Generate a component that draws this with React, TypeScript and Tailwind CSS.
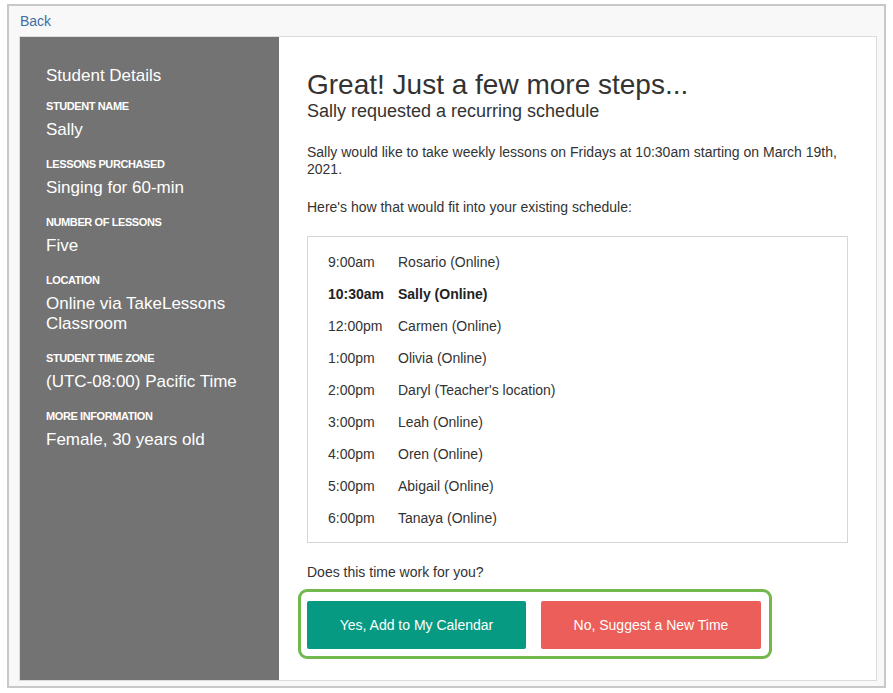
import React from 'react';

const details = [
  { label: 'Student Name', value: 'Sally' },
  { label: 'Lessons Purchased', value: 'Singing for 60-min' },
  { label: 'Number of Lessons', value: 'Five' },
  { label: 'Location', value: 'Online via TakeLessons Classroom' },
  { label: 'Student Time Zone', value: '(UTC-08:00) Pacific Time' },
  { label: 'More Information', value: 'Female, 30 years old' },
];

const schedule = [
  { time: '9:00am', who: 'Rosario (Online)' },
  { time: '10:30am', who: 'Sally (Online)', current: true },
  { time: '12:00pm', who: 'Carmen (Online)' },
  { time: '1:00pm', who: 'Olivia (Online)' },
  { time: '2:00pm', who: "Daryl (Teacher's location)" },
  { time: '3:00pm', who: 'Leah (Online)' },
  { time: '4:00pm', who: 'Oren (Online)' },
  { time: '5:00pm', who: 'Abigail (Online)' },
  { time: '6:00pm', who: 'Tanaya (Online)' },
];

export default function App() {
  return (
    <div className="min-h-screen bg-white pt-[4px] pl-[7px]" style={{ fontFamily: '"Liberation Sans", Arial, sans-serif' }}>
      <div className="w-[879px] border-2 border-[#c8c8c8] bg-[#f8f8f8] pt-[5px] pb-[5px] pl-[10px] pr-[7px]">
        <a href="#" className="block pl-[1px] text-[14px] leading-[20px] text-[#3f6ea6]">
          Back
        </a>
        <div className="mt-[5px] flex border border-[#dcdcdc] bg-white">
          {/* student sidebar */}
          <aside className="w-[259px] shrink-0 bg-[#737373] pl-[26px] pt-[29px] text-white">
            <h2 className="text-[17px] leading-[20px]">Student Details</h2>
            <div className="mt-[13px] flex flex-col gap-[17px]">
              {details.map((d) => (
                <div key={d.label}>
                  <div className="text-[11px] font-bold uppercase leading-[14px] tracking-[-0.4px]">{d.label}</div>
                  <div className="mt-[7px] w-[200px] text-[17px] leading-[20px]">{d.value}</div>
                </div>
              ))}
            </div>
          </aside>

          {/* main panel */}
          <main className="flex-1 px-[28px] pt-[33px] pb-[21px] text-[#333333]">
            <h1 className="text-[28px] leading-[30px]">Great! Just a few more steps...</h1>
            <h3 className="text-[18px] leading-[22px]">Sally requested a recurring schedule</h3>

            <p className="mt-[22px] text-[14px] leading-[17px]">
              Sally would like to take weekly lessons on Fridays at 10:30am starting on March 19th, 2021.
            </p>
            <p className="mt-[21px] text-[14px] leading-[17px]">Here's how that would fit into your existing schedule:</p>

            <div className="mt-[20px] border border-[#d6d6d6] pl-[20px] pt-[9px] pb-[8px]">
              {schedule.map((s) => (
                <div key={s.time} className={`flex text-[14px] leading-[32px] ${s.current ? 'font-bold text-[#222]' : ''}`}>
                  <span className="w-[70px]">{s.time}</span>
                  <span>{s.who}</span>
                </div>
              ))}
            </div>

            <p className="mt-[21px] text-[14px] leading-[17px]">Does this time work for you?</p>

            <div className="-ml-[9px] mt-[8px] inline-flex gap-[15px] rounded-[9px] border-[3px] border-[#72b84c] pl-[6px] pr-[8px] pt-[9px] pb-[7px]">
              <button className="h-[48px] w-[219px] rounded-[2px] bg-[#069a82] text-[14px] text-white">
                Yes, Add to My Calendar
              </button>
              <button className="h-[48px] w-[220px] rounded-[2px] bg-[#ec5e59] text-[14px] text-white">
                No, Suggest a New Time
              </button>
            </div>
          </main>
        </div>
      </div>
    </div>
  );
}
